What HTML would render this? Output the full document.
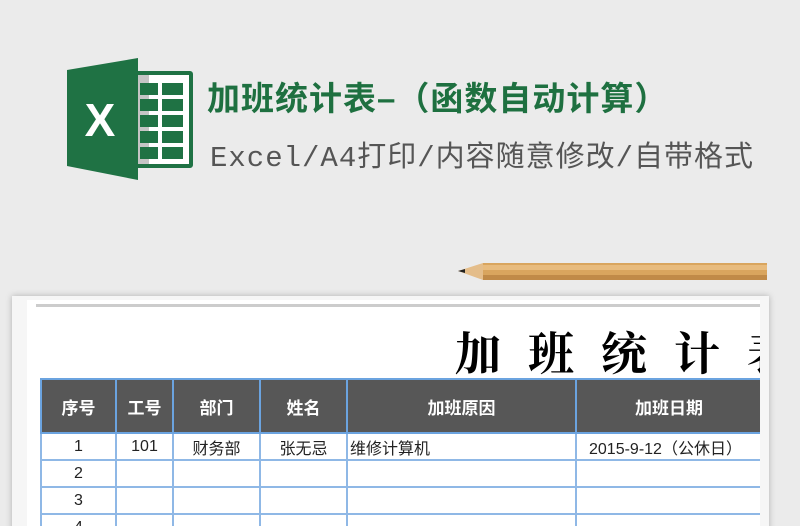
<!DOCTYPE html>
<html><head><meta charset="utf-8"><style>
html,body{margin:0;padding:0;width:800px;height:526px;overflow:hidden}
body{background:#ebebeb;font-family:"Liberation Sans","Noto Sans CJK SC",sans-serif}
#root{position:relative;width:800px;height:526px;overflow:hidden}
.t1{position:absolute;left:207px;top:72px;font-size:33px;font-weight:bold;color:#1e7040;white-space:nowrap;letter-spacing:1px}
.t2{position:absolute;left:210px;top:133px;font-size:29px;color:#555;white-space:nowrap;font-family:"Liberation Mono","Noto Sans CJK SC",monospace;letter-spacing:1px}
.paper{position:absolute;left:12px;top:296px;width:757px;height:240px;background:#f6f6f6;box-shadow:0 0 6px rgba(0,0,0,.25)}
.inner{position:absolute;left:27px;top:300px;width:733px;height:230px;background:#fff;overflow:hidden}
.big{position:absolute;left:428px;top:18px;font-size:46px;font-family:"Noto Serif CJK SC",serif;font-weight:bold;letter-spacing:27px;white-space:nowrap;color:#000}
table{position:absolute;left:13px;top:78px;border-collapse:collapse;font-size:16px;table-layout:fixed;width:760px}
td{border:2px solid #8fb8e6;text-align:center;padding:0;height:25px;color:#222;white-space:nowrap;overflow:hidden}
tr.h td{background:#575757;color:#fff;height:52px;font-weight:bold;border-color:#6ba3df;font-size:17px}
</style></head><body><div id="root">
<svg style="position:absolute;left:66px;top:58px" width="130" height="122" viewBox="0 0 130 122">
<rect x="60" y="13" width="67" height="97" rx="3" fill="#1f7244"/>
<rect x="63" y="17" width="60" height="89" fill="#fff"/>
<rect x="72" y="17" width="11" height="89" fill="#c5c5c5"/>
<g fill="#1f7244">
<rect x="74" y="25" width="18" height="12"/><rect x="96" y="25" width="21" height="12"/>
<rect x="74" y="41" width="18" height="12"/><rect x="96" y="41" width="21" height="12"/>
<rect x="74" y="57" width="18" height="12"/><rect x="96" y="57" width="21" height="12"/>
<rect x="74" y="73" width="18" height="12"/><rect x="96" y="73" width="21" height="12"/>
<rect x="74" y="89" width="18" height="12"/><rect x="96" y="89" width="21" height="12"/>
</g>
<polygon points="1,12 72,0 72,122 1,108" fill="#1f7244"/>
<text x="34" y="78" font-size="46" font-weight="bold" fill="#fff" text-anchor="middle" font-family="Liberation Sans">X</text>
</svg>
<div class="t1">加班统计表–（函数自动计算）</div>
<div class="t2">Excel/A4打印/内容随意修改/自带格式</div>
<svg style="position:absolute;left:455px;top:260px" width="315" height="24">
<polygon points="3,11 28,3 28,20" fill="#e4bd8a"/>
<polygon points="3,11 10,9 10,13" fill="#222"/>
<rect x="28" y="3" width="284" height="17" fill="#d9a55e"/>
<rect x="28" y="5" width="284" height="5" fill="#e8bb7d"/>
<rect x="28" y="15" width="284" height="5" fill="#c08a48"/>
</svg>
<div class="paper"></div>
<div class="inner">
<div style="position:absolute;left:9px;top:4px;width:730px;height:3px;background:#ccc"></div>
<div class="big">加班统计表</div>
<table>
<colgroup><col style="width:75px"><col style="width:57px"><col style="width:87px"><col style="width:87px"><col style="width:229px"><col style="width:225px"></colgroup>
<tr class="h"><td>序号</td><td>工号</td><td>部门</td><td>姓名</td><td>加班原因</td><td style="text-align:left;padding-left:58px">加班日期</td></tr>
<tr><td>1</td><td>101</td><td>财务部</td><td>张无忌</td><td style="text-align:left;padding-left:2px">维修计算机</td><td style="text-align:left;padding-left:12px">2015-9-12（公休日）</td></tr>
<tr><td>2</td><td></td><td></td><td></td><td></td><td></td></tr>
<tr><td>3</td><td></td><td></td><td></td><td></td><td></td></tr>
<tr><td>4</td><td></td><td></td><td></td><td></td><td></td></tr>
</table>
</div>
</div></body></html>
